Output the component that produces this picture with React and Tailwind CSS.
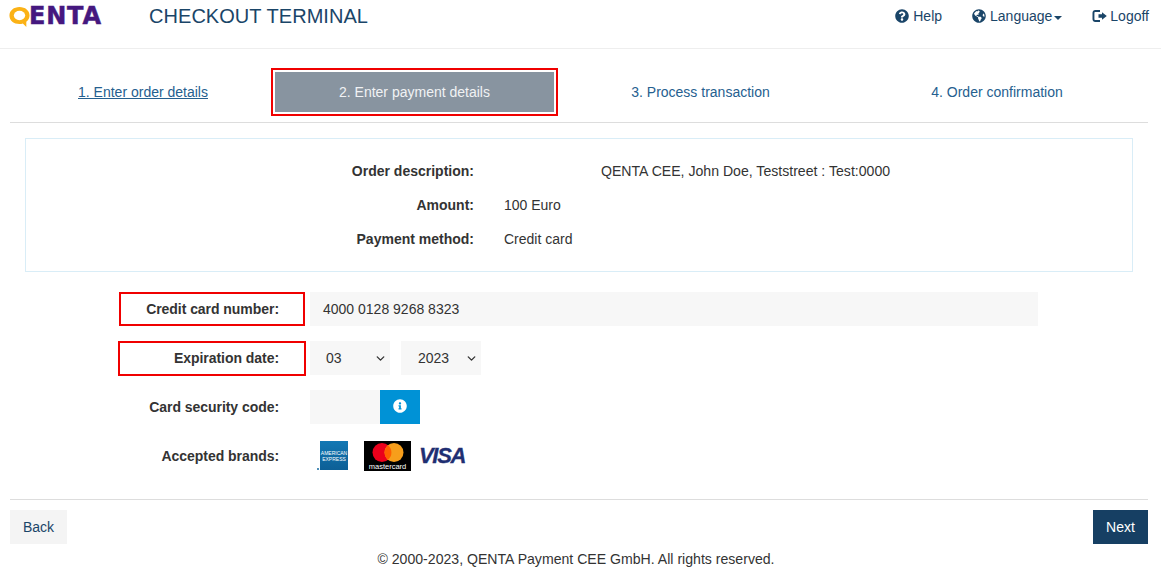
import { FaQuestionCircle, FaGlobeAmericas, FaInfoCircle } from 'react-icons/fa'
import { ChevronDown } from 'lucide-react'

const NAVY = 'text-[#1a4568]'

function Logo() {
  return (
    <div className="flex items-start w-[140px] h-[22px] ml-[9px] mt-[6px]">
      <svg width="21" height="22" viewBox="0 0 24 25" className="shrink-0">
        <path d="M12 1C5.500 1 .5 5 .5 10.800S5.500 20.500 12 20.500c1.500 0 2.600-.2 3.800-.6l4 4.100v-6.200c2.300-1.700 3.700-4 3.700-7C23.500 5 18.500 1 12 1z" fill="#fbb216" />
        <ellipse cx="12" cy="10.800" rx="6.500" ry="5.400" fill="#fff" />
      </svg>
      <span className="-ml-[1px] -mt-[2px] font-['DejaVu_Sans',sans-serif] font-bold text-[24px] leading-[24px] tracking-[0.800px] [-webkit-text-stroke:0.5px_#45187f] text-[#45187f]">ENTA</span>
    </div>
  )
}

function LogoffIcon() {
  return (
    <svg width="15" height="14" viewBox="0 0 15 14" fill="currentColor">
      <path d="M8 1H3.200C1.700 1 .5 2.200.5 3.700v6.600C.5 11.800 1.700 13 3.200 13H8v-2H3.400c-.6 0-1-.4-1-1V4c0-.6.4-1 1-1H8z" />
      <path d="M10 3.200 14.800 7 10 10.800V8.700H6.500V5.300H10z" />
    </svg>
  )
}

function Amex() {
  return (
    <div className="relative w-[30px] h-[30px] ml-[7px]">
      <div className="ml-[3px] w-[28px] h-[29px] bg-gradient-to-b from-[#1278b4] to-[#0d5f96] flex flex-col justify-center items-center text-white text-[5px] leading-[6px]">
        <span>AMERICAN</span>
        <span>EXPRESS</span>
      </div>
      <div className="absolute left-0 bottom-[1px] w-[2px] h-[2px] bg-[#4f8fb8]" />
    </div>
  )
}

function Mastercard() {
  return (
    <div className="w-[47px] h-[30px] bg-black ml-[17px] flex flex-col items-center">
      <svg width="34" height="21" viewBox="0 0 34 21" className="mt-[1px]">
        <circle cx="11" cy="10.500" r="9.500" fill="#eb001b" />
        <circle cx="23" cy="10.500" r="9.500" fill="#f79e1b" />
        <path d="M17 3.200a9.500 9.500 0 0 1 0 14.600 9.500 9.500 0 0 1 0-14.600z" fill="#ff5f00" />
      </svg>
      <span className="text-white text-[7.500px] leading-[7px]">mastercard</span>
    </div>
  )
}

function Visa() {
  return <span className="ml-[8px] font-bold italic text-[22px] leading-none tracking-[-1.300px] [-webkit-text-stroke:0.3px_#1f2f72] text-[#1f2f72]">VISA</span>
}

function Select({ value, className = '', textClass = 'pl-[16px]' }) {
  return (
    <div className={`relative w-[80px] h-[34px] ${className}`}>
      <div className={`w-full h-full bg-[#f7f7f7] leading-[34px] text-[#333] ${textClass}`}>{value}</div>
      <ChevronDown size={13} strokeWidth={2.500} className="absolute right-[3px] top-[11px] text-[#333]" />
    </div>
  )
}

function FormRow({ label, labelClass = 'pr-[31px] h-[34px]', children }) {
  return (
    <div className="flex items-start h-[34px] mb-[15px]">
      <div className="w-[300px] flex justify-end">
        <div className={`flex items-center justify-end ${labelClass}`}>
          <span className="font-bold text-[#333] tracking-[-0.050px]">{label}</span>
        </div>
      </div>
      {children}
    </div>
  )
}

function InfoRow({ label, value, valueClass = 'ml-[30px]' }) {
  return (
    <div className="flex h-[34px] items-center">
      <div className="w-[448px] text-right font-bold text-[#333]">{label}</div>
      <div className={`${valueClass} text-[#333]`}>{value}</div>
    </div>
  )
}

export default function App() {
  return (
    <div className="w-[1161px] h-[571px] overflow-hidden bg-white font-['Liberation_Sans',Arial,sans-serif] text-[14px]">
      <header className="h-[49px] border-b border-[#eeeeee] flex items-start">
        <Logo />
        <h1 className={`text-[20px] leading-[32px] tracking-[0.050px] ${NAVY}`}>CHECKOUT TERMINAL</h1>
        <nav className={`ml-auto flex items-center h-[32px] ${NAVY}`}>
          <a className="flex items-center gap-[4px]"><FaQuestionCircle size={14} />Help</a>
          <a className="flex items-center gap-[4px] ml-[30px]">
            <FaGlobeAmericas size={14} />
            <span>Language</span>
            <span className="-ml-[2px] mt-[3px] w-0 h-0 border-x-[4px] border-t-[4px] border-x-transparent border-t-[#1a4568]" />
          </a>
          <a className="flex items-center gap-[3px] ml-[30px] mr-[12px]"><LogoffIcon />Logoff</a>
        </nav>
      </header>

      <main className="ml-[10px] w-[1138px]">
        <div className="mt-[19px] pb-[6px] border-b border-[#dddddd]">
          <div className="grid grid-cols-[261px_287px_285px_305px] items-center h-[48px] text-[#25608f]">
            <a className="text-center pl-[5px] underline">1. Enter order details</a>
            <div className="h-[48px] border-2 border-[#f00000] p-[2px]">
              <div className="h-full bg-[#8894a0] text-[#f0f2f4] text-center leading-[40px]">2. Enter payment details</div>
            </div>
            <span className="text-center">3. Process transaction</span>
            <span className="text-center pl-[3px]">4. Order confirmation</span>
          </div>
        </div>

        <section className="mx-[15px] mt-[15px] h-[134px] border border-[#d9edf7] pt-[15px]">
          <InfoRow label="Order description:" value="QENTA CEE, John Doe, Teststreet : Test:0000" valueClass="ml-[127px] mt-[1px] text-[14.100px]" />
          <InfoRow label="Amount:" value="100 Euro" />
          <InfoRow label="Payment method:" value="Credit card" />
        </section>

        <section className="mt-[20px]">
          <FormRow label="Credit card number:" labelClass="w-[186px] h-[34px] mr-[5px] border-2 border-[#f00000] pr-[24px]">
            <div className="w-[728px] h-[34px] bg-[#f7f7f7] pl-[13px] leading-[34px] text-[#333]">4000 0128 9268 8323</div>
          </FormRow>
          <FormRow label="Expiration date:" labelClass="w-[188px] h-[35px] mr-[4px] border-2 border-[#f00000] pr-[25px]">
            <Select value="03" />
            <Select value="2023" className="ml-[11px]" textClass="pl-[17px]" />
          </FormRow>
          <FormRow label="Card security code:">
            <div className="w-[70px] h-[34px] bg-[#f7f7f7]" />
            <div className="w-[40px] h-[34px] bg-[#0092d6] flex items-center justify-center text-white"><FaInfoCircle size={14} className="-mt-[2px]" /></div>
          </FormRow>
          <FormRow label="Accepted brands:">
            <div className="flex items-center h-[34px]">
              <Amex />
              <Mastercard />
              <Visa />
            </div>
          </FormRow>
        </section>

        <div className="mt-[26px] pt-[10px] border-t border-[#dddddd] flex justify-between">
          <button className={`w-[57px] h-[34px] bg-[#f4f4f4] ${NAVY}`}>Back</button>
          <button className="w-[55px] h-[34px] bg-[#163f63] text-white">Next</button>
        </div>
        <p className="mt-[7px] text-center text-[#333] text-[14.100px] leading-[16px] pr-[6px]">© 2000-2023, QENTA Payment CEE GmbH. All rights reserved.</p>
      </main>
    </div>
  )
}
